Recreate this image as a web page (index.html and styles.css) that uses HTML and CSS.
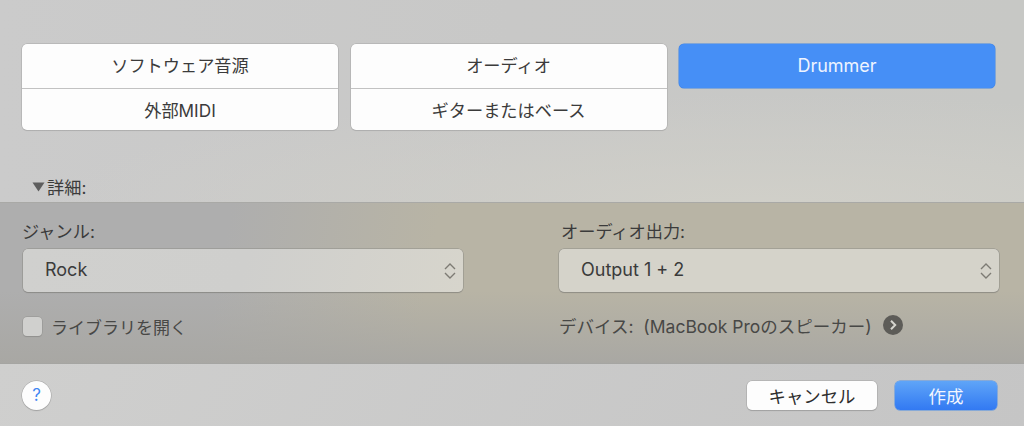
FILE: index.html
```html
<!DOCTYPE html>
<html lang="ja">
<head>
<meta charset="utf-8">
<title>新規トラック</title>
<link rel="stylesheet" href="styles.css">
</head>
<body>
<div class="dialog">
  <section class="top">
    <div class="types">
      <div class="group">
        <div class="seg">ソフトウェア音源</div>
        <div class="seg">外部MIDI</div>
      </div>
      <div class="group">
        <div class="seg">オーディオ</div>
        <div class="seg">ギターまたはベース</div>
      </div>
      <div class="seg selected">Drummer</div>
    </div>
    <div class="details">
      <svg class="tri" width="13" height="10" viewBox="0 0 13 10"><path d="M0.5 0.5H12.5L6.5 9.5Z" fill="#5e5e5e"/></svg>
      <span>詳細:</span>
    </div>
  </section>
  <section class="mid">
    <div class="col col-left">
      <div class="label">ジャンル:</div>
      <div class="select">
        <span>Rock</span>
        <svg class="updown" width="12" height="18" viewBox="0 0 12 18"><path d="M1 7L6 2L11 7M1 11L6 16L11 11" fill="none" stroke="#7d7b74" stroke-width="1.4"/></svg>
      </div>
      <div class="option">
        <span class="check"></span>
        <span>ライブラリを開く</span>
      </div>
    </div>
    <div class="col col-right">
      <div class="label">オーディオ出力:</div>
      <div class="select">
        <span>Output 1 + 2</span>
        <svg class="updown" width="12" height="18" viewBox="0 0 12 18"><path d="M1 7L6 2L11 7M1 11L6 16L11 11" fill="none" stroke="#7d7b74" stroke-width="1.4"/></svg>
      </div>
      <div class="option device">
        <span>デバイス:&nbsp;&nbsp;(MacBook Proのスピーカー)</span>
        <svg class="go" width="20" height="20" viewBox="0 0 20 20"><circle cx="10" cy="10" r="10" fill="#5d5c58"/><path d="M8 5.8L12.2 10L8 14.2" fill="none" stroke="#d6d5cf" stroke-width="2"/></svg>
      </div>
    </div>
  </section>
  <footer class="bottom">
    <div class="help">?</div>
    <div class="actions">
      <div class="btn">キャンセル</div>
      <div class="btn primary">作成</div>
    </div>
  </footer>
</div>
</body>
</html>
```
FILE: styles.css
```css
* { box-sizing: border-box; }
html, body { margin: 0; padding: 0; }
body {
  width: 1024px;
  height: 426px;
  overflow: hidden;
  font-family: Inter, "Noto Sans CJK JP", sans-serif;
  font-size: 17.2px;
  color: #3b3b3b;
}
.dialog {
  display: flex;
  flex-direction: column;
  height: 426px;
}
.top {
  height: 202px;
  padding: 44px 28px 0 22px;
  display: flex;
  flex-direction: column;
  background:
    radial-gradient(720px 110px at 760px 205px, rgba(209,208,201,.95), rgba(209,208,201,0)),
    linear-gradient(90deg, #cbcbcb 0%, #c8c8c7 50%, #c7c8c5 100%);
}
.types {
  display: grid;
  grid-template-columns: repeat(3, 316px);
  column-gap: 12.5px;
  align-items: start;
}
.group {
  display: flex;
  flex-direction: column;
  height: 86px;
  background: #fdfdfd;
  border-radius: 5px;
  box-shadow: 0 0 0 .5px #a8a8a8, 0 1px 1px rgba(0,0,0,.1);
  overflow: hidden;
}
.group .seg { flex: 1; }
.group .seg + .seg { border-top: 1px solid #c2c2c2; padding-bottom: 0; }
.seg {
  display: flex;
  align-items: center;
  justify-content: center;
  height: 44px;
  padding-bottom: 2px;
}
.selected {
  background: #468ff6;
  color: #eef4ff;
  border-radius: 5px;
  box-shadow: 0 0 0 .5px #3f83e4;
  font-size: 18px;
}
.details {
  margin-top: 45px;
  margin-left: 10px;
  display: flex;
  align-items: center;
  gap: 2px;
  height: 22px;
}
.tri { flex: none; margin-top: 1px; }
.mid {
  height: 162px;
  padding: 17px 24px 0 23px;
  display: flex;
  border-top: 1px solid #a9a9a6;
  border-bottom: 1px solid #a5a5a2;
  background:
    linear-gradient(180deg, rgba(168,167,163,0) 55%, rgba(168,167,163,.95) 100%),
    linear-gradient(100deg, #aeaeae 0%, #aeaeae 22%, #b8b4a5 42%, #b8b4a5 100%);
}
.col { display: flex; flex-direction: column; }
.col-left { width: 536px; }
.col-right { flex: 1; }
.label { height: 24px; line-height: 24px; margin-left: -1px; }
.col-right .label { margin-left: 2px; }
.select {
  margin-top: 5px;
  height: 43px;
  width: 440px;
  padding: 0 7px 0 22px;
  display: flex;
  align-items: center;
  justify-content: space-between;
  border-radius: 5px;
  background: linear-gradient(105deg, #d0d0ce 0%, #cfcfcd 50%, #d7d5cc 100%);
  box-shadow: 0 0 0 .5px #8e8d88, 0 1px 1px rgba(0,0,0,.2);
  font-size: 18px;
}
.select span { position: relative; top: -1px; }
.col-right .select { background: #d5d3ca; }
.option {
  margin-top: 24px;
  height: 20px;
  display: flex;
  align-items: center;
  gap: 9px;
  font-size: 17px;
  color: #484846;
}
.check {
  width: 19px;
  height: 19px;
  border-radius: 4px;
  background: #d0d0ce;
  box-shadow: 0 0 0 .5px #92928f, 0 1px 1px rgba(0,0,0,.15);
}
.device { gap: 11px; margin-top: 22px; height: 22px; font-size: 17.5px; }
.bottom {
  flex: 1;
  padding: 0 27px 0 22px;
  display: flex;
  align-items: center;
  justify-content: space-between;
  background: linear-gradient(120deg, #cfcfce, #c5c5c5);
}
.help {
  width: 29px;
  height: 29px;
  border-radius: 50%;
  background: #fdfdfd;
  color: #3f86f2;
  box-shadow: 0 0 0 .5px #a3a3a3, 0 1px 1px rgba(0,0,0,.2);
  display: flex;
  align-items: center;
  justify-content: center;
  font-size: 17px;
}
.actions { display: flex; gap: 18px; }
.btn {
  width: 130px;
  height: 29px;
  border-radius: 5px;
  background: #fdfdfd;
  box-shadow: 0 0 0 .5px #a3a3a3, 0 1px 1px rgba(0,0,0,.2);
  display: flex;
  align-items: center;
  justify-content: center;
  color: #2e2e2e;
  font-size: 17.4px;
}
.primary {
  width: 102px;
  background: linear-gradient(180deg, #5fa5f8, #3279f2);
  box-shadow: 0 0 0 .5px #4a8de8;
  color: #f2f6ff;
  font-size: 17.5px;
}
```
